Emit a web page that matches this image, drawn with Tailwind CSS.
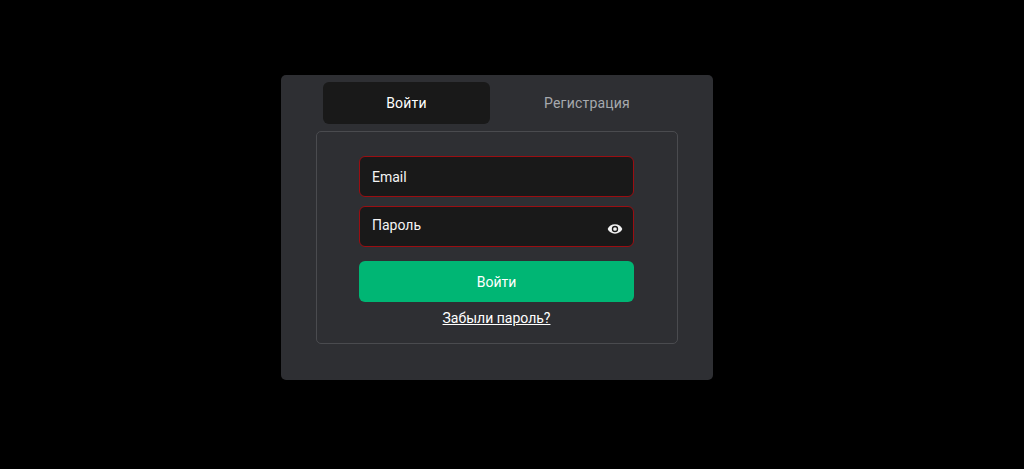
<!DOCTYPE html>
<html lang="ru">
<head>
    <meta charset="UTF-8">
    <title>Вход</title>
    <script src="https://cdn.jsdelivr.net/npm/@tailwindcss/browser@4"></script>
</head>
<body class="bg-black h-[469px] overflow-hidden font-['Roboto',sans-serif]">
    <div class="ml-[281px] pt-[75px] w-[432px]">
        <div class="bg-[#2e2f33] rounded-[5px] h-[305px] pt-[7px] px-[35px]">
            <!-- Tabs -->
            <div class="flex h-[42px] ml-[7px] w-[361px] text-sm tracking-[0.2px]">
                <div class="w-[167px] shrink-0 bg-[#191919] rounded-md flex items-center justify-center text-white">Войти</div>
                <div class="w-[194px] shrink-0 flex items-center justify-center text-[#a6a9ae]">Регистрация</div>
            </div>

            <!-- Form -->
            <div class="mt-[7px] w-[362px] h-[213px] border border-[#4a4b4f] rounded-[5px] pt-[24px] pl-[42px]">
                <div class="w-[275px] flex flex-col">
                    <div class="h-[41px] bg-[#191919] border border-[#9a0e12] rounded-md flex items-center pl-3 text-sm text-[#f4f4f4]">Email</div>
                    <div class="mt-[9px] h-[41px] bg-[#191919] border border-[#9a0e12] rounded-md flex items-center justify-between pl-3 pr-[10px] text-sm text-[#f4f4f4]">
                        <span class="-mt-1">Пароль</span>
                        <svg class="mt-1" width="16" height="16" viewBox="0 0 24 24" fill="#f2f2f2"><path d="M12 5C7 5 2.7 7.9 1 12c1.7 4.1 6 7 11 7s9.3-2.9 11-7c-1.7-4.1-6-7-11-7zM12 16.8a4.8 4.8 0 1 1 0-9.6 4.8 4.8 0 0 1 0 9.6zm0-7.6a2.8 2.8 0 1 0 0 5.6 2.8 2.8 0 0 0 0-5.6z"/></svg>
                    </div>
                    <button class="mt-[14px] h-[41px] bg-[#00b674] rounded-md text-sm text-white">Войти</button>
                    <a href="#" class="mt-[6px] text-center text-sm text-white underline">Забыли пароль?</a>
                </div>
            </div>
        </div>
    </div>
</body>
</html>
